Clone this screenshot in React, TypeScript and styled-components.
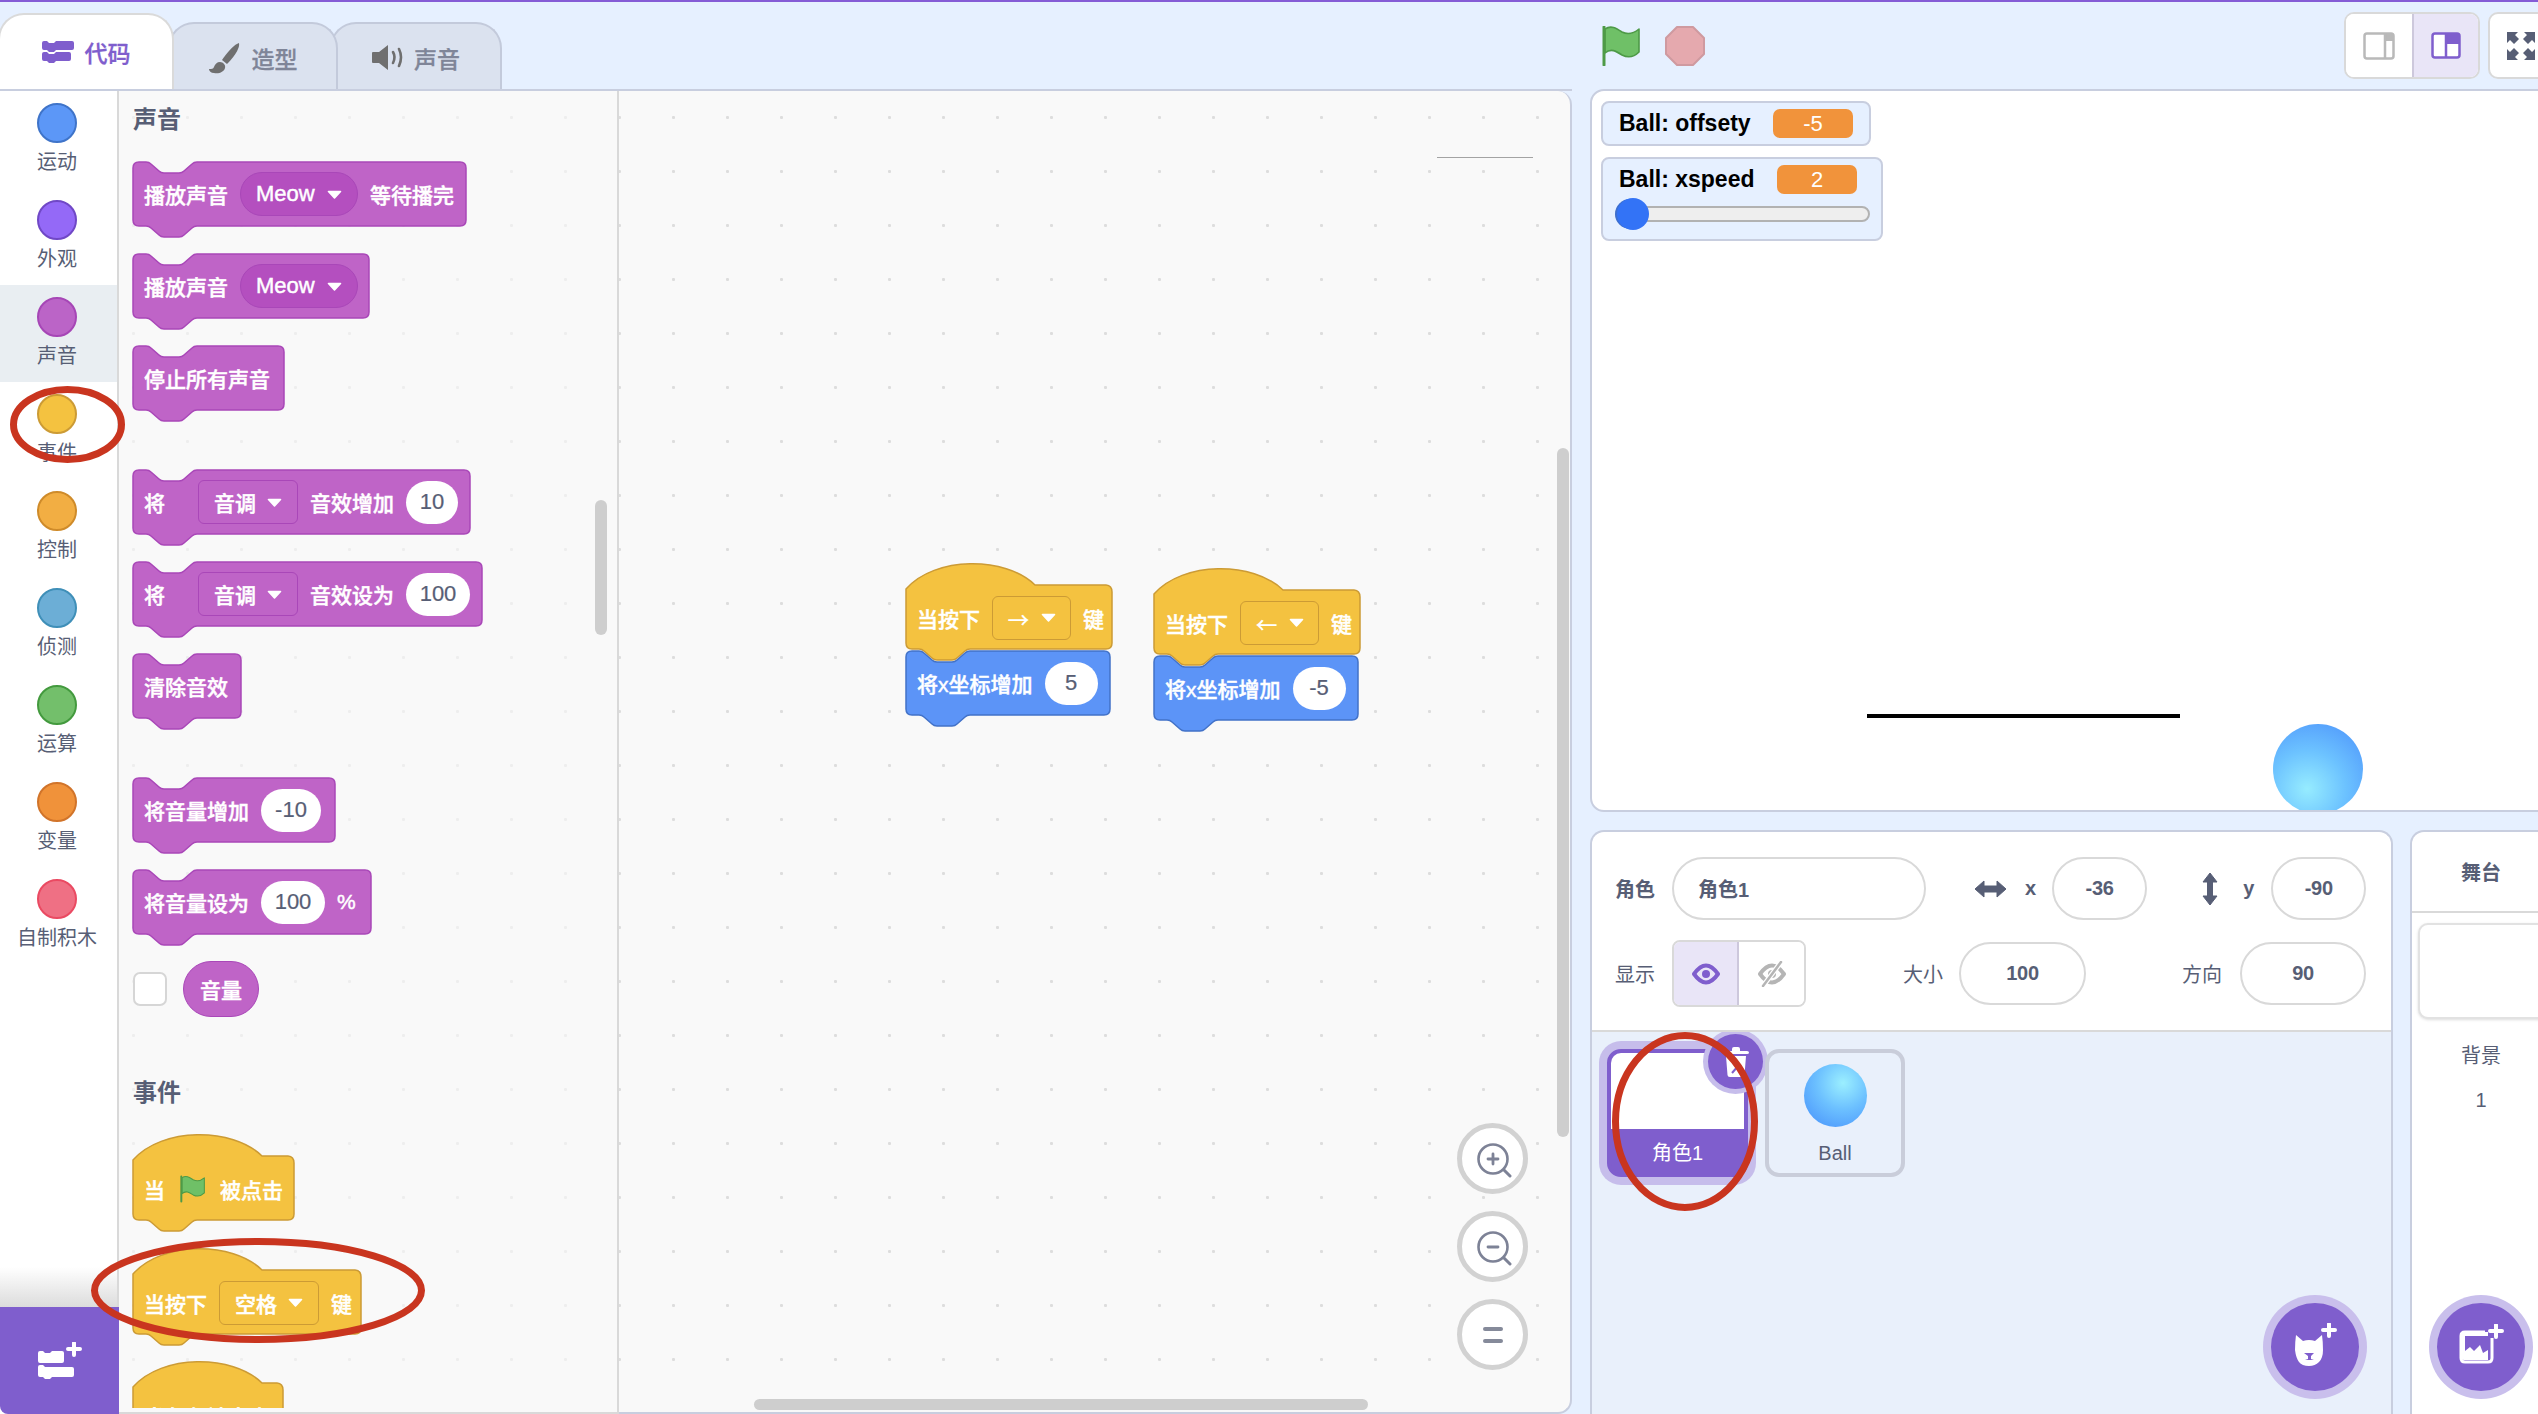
import React from "react";
import styled, { createGlobalStyle } from "styled-components";

const FONT = `"Liberation Sans", "Noto Sans CJK SC", sans-serif`;
const INK = "#575e75";
const PURPLE = "#7f5ecd";

const SOUND = { fill: "#bf64c7", line: "#a947b8", field: "#b44fbf" };
const EVENT = { fill: "#f4c240", line: "#cc9b35", field: "#f4c240" };
const MOTION = { fill: "#5c94f7", line: "#4272c8", field: "#5c94f7" };
type Tone = typeof SOUND;

const Global = createGlobalStyle`
  html, body { margin: 0; padding: 0; background: #e6f0ff; }
  * { box-sizing: border-box; }
`;

const Page = styled.div`
  position: relative;
  display: flex;
  width: 2538px;
  height: 1414px;
  overflow: hidden;
  border-top: 2px solid #855cd6;
  background: #e6f0ff;
  font-family: ${FONT};
  color: ${INK};
`;

const LeftPane = styled.div`
  display: flex;
  flex-direction: column;
  width: 1572px;
  flex: none;
`;

const TabBar = styled.div`
  display: flex;
  align-items: flex-end;
  height: 87px;
  flex: none;
`;

const Tab = styled.div<{ $active?: boolean; $w: number; $ml?: number; $z: number }>`
  display: flex;
  align-items: center;
  justify-content: center;
  gap: 11px;
  position: relative;
  z-index: ${(p) => p.$z};
  width: ${(p) => p.$w}px;
  height: ${(p) => (p.$active ? 76 : 67)}px;
  margin-left: ${(p) => p.$ml ?? 0}px;
  padding-top: ${(p) => (p.$active ? 0 : 2)}px;
  border: 2px solid ${(p) => (p.$active ? "#dadada" : "#c3cadb")};
  border-bottom: none;
  border-radius: 26px 26px 0 0;
  background: ${(p) => (p.$active ? "#fff" : "#dbe2ef")};
  color: ${(p) => (p.$active ? PURPLE : "#7f8598")};
  font-size: 23px;
  font-weight: 500;
  -webkit-text-stroke: 0.3px currentColor;
`;

const Editor = styled.div`
  display: flex;
  flex: 1;
  min-height: 0;
  border-top: 2px solid #c8cedf;
`;

const Categories = styled.div`
  display: flex;
  flex-direction: column;
  width: 119px;
  flex: none;
  background: #fff;
  border-right: 2px solid #d9d9d9;
`;

const CatItem = styled.div<{ $selected?: boolean }>`
  display: flex;
  flex-direction: column;
  align-items: center;
  height: 97px;
  padding: 12px 3px 0 0;
  background: ${(p) => (p.$selected ? "#e9eef2" : "transparent")};
`;

const CatDot = styled.span<{ $fill: string; $line: string }>`
  width: 40px;
  height: 40px;
  border-radius: 50%;
  background: ${(p) => p.$fill};
  border: 2px solid ${(p) => p.$line};
`;

const CatLabel = styled.span`
  margin-top: 7px;
  font-size: 20px;
  line-height: 24px;
  white-space: nowrap;
`;

const ExtFooter = styled.div`
  position: relative;
  display: flex;
  align-items: center;
  justify-content: center;
  margin-top: auto;
  margin-right: -2px;
  height: 107px;
  flex: none;
  background: ${PURPLE};
  border-bottom-left-radius: 8px;
  &::before {
    content: "";
    position: absolute;
    left: 0;
    right: 2px;
    top: -40px;
    height: 40px;
    background: linear-gradient(#ffffff, #dcdcdc);
  }
`;

const Flyout = styled.div`
  position: relative;
  width: 500px;
  flex: none;
  padding-bottom: 4px;
  background-color: #f9f9f9;
  background-image: radial-gradient(circle at 1.5px 1.5px, #eeeeee 1.3px, transparent 1.7px);
  background-size: 54px 54px;
  background-position: 13px 25px;
  border-right: 2px solid #d9d9d9;
  border-bottom: 2px solid #d9d9d9;
`;

const FlyoutClip = styled.div`
  display: flex;
  flex-direction: column;
  align-items: flex-start;
  gap: 26px;
  height: 100%;
  padding: 14px 0 0 13px;
  overflow: hidden;
`;

const SectionTitle = styled.div<{ $mt?: number }>`
  margin-top: ${(p) => p.$mt ?? 0}px;
  margin-left: 1px;
  font-size: 24px;
  line-height: 30px;
  font-weight: 700;
`;

const FlyBar = styled.div`
  position: absolute;
  left: 476px;
  top: 409px;
  width: 12px;
  height: 135px;
  border-radius: 6px;
  background: #cecece;
`;

const Workspace = styled.div`
  position: relative;
  flex: 1;
  overflow: hidden;
  background-color: #f9f9f9;
  background-image: radial-gradient(circle at 1.5px 1.5px, #dddddd 1.3px, transparent 1.7px);
  background-size: 54px 54px;
  background-position: -1px 25px;
  border-right: 2px solid #c8cedf;
  border-bottom: 2px solid #c8cedf;
  border-radius: 0 14px 14px 0;
`;

const Script = styled.div<{ $x: number; $y: number }>`
  position: absolute;
  left: ${(p) => p.$x}px;
  top: ${(p) => p.$y}px;
  display: flex;
  flex-direction: column;
`;

const StrayLine = styled.div`
  position: absolute;
  left: 818px;
  top: 66px;
  width: 96px;
  height: 1px;
  background: #a3a3a3;
`;

const VBar = styled.div`
  position: absolute;
  right: 1px;
  top: 357px;
  width: 12px;
  height: 689px;
  border-radius: 6px;
  background: #cecece;
`;

const HBar = styled.div`
  position: absolute;
  left: 135px;
  bottom: 2px;
  width: 614px;
  height: 11px;
  border-radius: 6px;
  background: #cecece;
`;

const ZoomStack = styled.div`
  position: absolute;
  left: 838px;
  top: 1032px;
  display: flex;
  flex-direction: column;
  gap: 17px;
`;

const ZoomButton = styled.div`
  display: flex;
  align-items: center;
  justify-content: center;
  width: 71px;
  height: 71px;
  border-radius: 50%;
  background: #fff;
  border: 5px solid #d2d2d2;
`;

const BlockWrap = styled.div<{ $w: number; $h: number; $pt: number; $mt?: number }>`
  position: relative;
  flex: none;
  width: ${(p) => p.$w}px;
  height: ${(p) => p.$h}px;
  padding-top: ${(p) => p.$pt}px;
  margin-top: ${(p) => p.$mt ?? 0}px;
`;

const BlockShape = styled.svg`
  position: absolute;
  left: 0;
  top: 0;
  overflow: visible;
`;

const BlockRow = styled.div`
  position: relative;
  display: flex;
  align-items: center;
  gap: 12px;
  height: 100%;
  padding-left: 12px;
  color: #fff;
  font-size: 21px;
  font-weight: 500;
  white-space: nowrap;
  -webkit-text-stroke: 0.45px #fff;
`;

const RoundMenu = styled.div<{ $tone: Tone; $w: number }>`
  display: flex;
  align-items: center;
  gap: 12px;
  width: ${(p) => p.$w}px;
  height: 44px;
  padding-left: 15px;
  border-radius: 22px;
  background: ${(p) => p.$tone.field};
  border: 1px solid ${(p) => p.$tone.line};
  font-size: 22px;
`;

const SquareMenu = styled.div<{ $tone: Tone; $w: number; $ml?: number }>`
  display: flex;
  align-items: center;
  justify-content: center;
  gap: 11px;
  width: ${(p) => p.$w}px;
  height: 44px;
  margin-left: ${(p) => p.$ml ?? 0}px;
  border-radius: 6px;
  background: ${(p) => p.$tone.fill};
  border: 1.5px solid ${(p) => p.$tone.line};
`;

const ArrowGlyph = styled.span`
  font-family: "Noto Sans CJK SC", sans-serif;
  font-size: 22px;
  -webkit-text-stroke: 0;
`;

const FlagSlot = styled.span`
  display: flex;
  margin: 0 3px;
`;

const NumberInput = styled.div<{ $w: number }>`
  display: flex;
  align-items: center;
  justify-content: center;
  width: ${(p) => p.$w}px;
  height: 43px;
  border-radius: 22px;
  background: #fff;
  color: ${INK};
  font-size: 22px;
  font-weight: 400;
  -webkit-text-stroke: 0.2px ${INK};
`;

const ReporterRow = styled.div`
  display: flex;
  align-items: center;
  gap: 16px;
  margin-left: 1px;
`;

const CheckBox = styled.span`
  width: 34px;
  height: 34px;
  border-radius: 7px;
  background: #fff;
  border: 2px solid #d6d6d6;
`;

const Reporter = styled.div`
  display: flex;
  align-items: center;
  justify-content: center;
  width: 76px;
  height: 56px;
  border-radius: 28px;
  background: ${SOUND.fill};
  border: 1px solid ${SOUND.line};
  color: #fff;
  font-size: 21px;
  font-weight: 500;
  -webkit-text-stroke: 0.45px #fff;
`;

const RightPane = styled.div`
  display: flex;
  flex-direction: column;
  flex: none;
  margin-left: 18px;
  width: 948px;
`;

const StageHeader = styled.div`
  display: flex;
  align-items: center;
  height: 87px;
  flex: none;
  padding-left: 12px;
  & > svg {
    flex: none;
  }
`;

const StopSign = styled.svg`
  margin-left: 25px;
`;

const SizeGroup = styled.div`
  display: flex;
  height: 67px;
  margin-left: 639px;
  flex: none;
  border: 2px solid #d9d9d9;
  border-radius: 10px;
  overflow: hidden;
  background: #fff;
`;

const SizeButton = styled.div<{ $on?: boolean }>`
  display: flex;
  align-items: center;
  justify-content: center;
  width: 66px;
  background: ${(p) => (p.$on ? "#e9e5f7" : "#fff")};
  border-left: ${(p) => (p.$on ? "2px solid #cdc8dc" : "none")};
`;

const FullButton = styled.div`
  display: flex;
  align-items: center;
  justify-content: flex-start;
  width: 67px;
  height: 67px;
  margin-left: 8px;
  padding-left: 17px;
  flex: none;
  background: #fff;
  border: 2px solid #d9d9d9;
  border-radius: 10px;
`;

const Stage = styled.div`
  position: relative;
  display: flex;
  flex-direction: column;
  align-items: flex-start;
  gap: 11px;
  width: 1000px;
  height: 723px;
  flex: none;
  padding: 10px 0 0 9px;
  overflow: hidden;
  background: #fff;
  border: 2px solid #c8cedf;
  border-radius: 14px;
`;

const Monitor = styled.div<{ $w: number; $slider?: boolean }>`
  width: ${(p) => p.$w}px;
  height: ${(p) => (p.$slider ? 84 : 45)}px;
  padding: 6px ${(p) => (p.$slider ? 24 : 16)}px 0 16px;
  border: 2px solid #c8cedf;
  border-radius: 8px;
  background: #e6f0ff;
`;

const MonitorRow = styled.div`
  display: flex;
  align-items: center;
  justify-content: space-between;
  height: 29px;
  color: #000;
  font-size: 23px;
  font-weight: 700;
  white-space: nowrap;
`;

const MonitorChip = styled.span`
  display: flex;
  align-items: center;
  justify-content: center;
  width: 80px;
  height: 29px;
  border-radius: 7px;
  background: #f1933b;
  color: #fff;
  font-size: 22px;
  font-weight: 400;
`;

const SliderTrack = styled.div`
  position: relative;
  width: 255px;
  height: 16px;
  margin: 12px 0 0 -4px;
  background: #eeeeee;
  border: 2px solid #b2b2b2;
  border-radius: 8px;
`;

const SliderThumb = styled.span`
  position: absolute;
  left: 0;
  top: -10px;
  width: 32px;
  height: 32px;
  border-radius: 50%;
  background: #3373f6;
  box-shadow: -3px 0 0 -1px #3d6fd0;
`;

const PlayLine = styled.div`
  position: absolute;
  left: 275px;
  top: 623px;
  width: 313px;
  height: 4px;
  background: #000;
`;

const StageBall = styled.div`
  position: absolute;
  left: 681px;
  top: 633px;
  width: 90px;
  height: 90px;
  border-radius: 50%;
  background: radial-gradient(circle at 38% 72%, #96ecff 0%, #6cc2ff 45%, #4a8ffb 100%);
`;

const LowerRow = styled.div`
  display: flex;
  gap: 17px;
  margin-top: 18px;
  flex: 1;
  min-height: 0;
`;

const SpritePanel = styled.div`
  display: flex;
  flex-direction: column;
  width: 803px;
  flex: none;
  border: 2px solid #c8cedf;
  border-bottom: none;
  border-radius: 14px 14px 0 0;
  overflow: hidden;
  background: #fff;
`;

const SpriteInfo = styled.div`
  display: flex;
  flex-direction: column;
  gap: 22px;
  height: 200px;
  flex: none;
  padding: 25px 0 0 23px;
  border-bottom: 2px solid #d9d9d9;
`;

const InfoRow = styled.div`
  display: flex;
  align-items: center;
  height: 63px;
`;

const InfoLabel = styled.span<{ $ml?: number; $strong?: boolean }>`
  margin-left: ${(p) => p.$ml ?? 0}px;
  font-size: 20px;
  font-weight: ${(p) => (p.$strong ? 700 : 400)};
  white-space: nowrap;
`;

const InfoInput = styled.div<{ $w: number; $ml: number; $left?: boolean }>`
  display: flex;
  align-items: center;
  justify-content: ${(p) => (p.$left ? "flex-start" : "center")};
  width: ${(p) => p.$w}px;
  height: 63px;
  margin-left: ${(p) => p.$ml}px;
  padding-left: ${(p) => (p.$left ? 24 : 0)}px;
  border: 2px solid #d9d9d9;
  border-radius: 32px;
  font-size: 20px;
  font-weight: 700;
  letter-spacing: ${(p) => (p.$left ? 0 : -0.3)}px;
`;

const AxisIcon = styled.svg<{ $ml: number }>`
  margin-left: ${(p) => p.$ml}px;
  flex: none;
`;

const AxisLetter = styled.span<{ $ml: number }>`
  margin-left: ${(p) => p.$ml}px;
  font-size: 20px;
  font-weight: 700;
`;

const Toggle = styled.div`
  display: flex;
  width: 134px;
  height: 67px;
  margin-left: 17px;
  flex: none;
  border: 2px solid #d9d9d9;
  border-radius: 8px;
  overflow: hidden;
`;

const ToggleHalf = styled.div<{ $on?: boolean }>`
  display: flex;
  align-items: center;
  justify-content: center;
  width: 50%;
  background: ${(p) => (p.$on ? "#e9e5f7" : "#fff")};
  border-right: ${(p) => (p.$on ? "2px solid #cdc8dc" : "none")};
`;

const SpriteList = styled.div`
  position: relative;
  display: flex;
  align-items: flex-start;
  gap: 17px;
  flex: 1;
  padding: 17px 0 0 15px;
  overflow: hidden;
  background: #e9f0fb;
`;

const Tile = styled.div<{ $selected?: boolean }>`
  position: relative;
  display: flex;
  flex-direction: column;
  width: ${(p) => (p.$selected ? 141 : 140)}px;
  height: 128px;
  flex: none;
  border: 4px solid ${(p) => (p.$selected ? PURPLE : "#c9cdda")};
  border-radius: 14px;
  background: ${(p) => (p.$selected ? PURPLE : "transparent")};
  box-shadow: ${(p) => (p.$selected ? "0 0 0 8px #c6bdeb" : "none")};
`;

const TileThumb = styled.div<{ $blank?: boolean }>`
  display: flex;
  align-items: center;
  justify-content: center;
  height: 76px;
  flex: none;
  background: ${(p) => (p.$blank ? "#fff" : "transparent")};
  border-radius: 10px 10px 0 0;
`;

const TileBall = styled.div`
  width: 63px;
  height: 63px;
  margin-top: 8px;
  border-radius: 50%;
  background: radial-gradient(circle at 62% 30%, #9befff 0%, #6cc0ff 45%, #448dfb 100%);
`;

const TileName = styled.div<{ $selected?: boolean }>`
  display: flex;
  align-items: center;
  justify-content: center;
  flex: 1;
  padding-top: ${(p) => (p.$selected ? 0 : 4)}px;
  color: ${(p) => (p.$selected ? "#fff" : INK)};
  font-size: 20px;
`;

const DeleteBadge = styled.div`
  position: absolute;
  right: -19px;
  top: -19px;
  display: flex;
  align-items: center;
  justify-content: center;
  width: 55px;
  height: 55px;
  border-radius: 50%;
  background: ${PURPLE};
  box-shadow: 0 0 0 5px #c6bdeb;
`;

const AddButton = styled.div<{ $right: number }>`
  position: absolute;
  right: ${(p) => p.$right}px;
  bottom: 23px;
  display: flex;
  align-items: center;
  justify-content: center;
  width: 88px;
  height: 88px;
  border-radius: 50%;
  background: ${PURPLE};
  box-shadow: 0 0 0 8px #c9bfec;
`;

const BackdropPanel = styled.div`
  position: relative;
  display: flex;
  flex-direction: column;
  align-items: center;
  width: 142px;
  flex: none;
  background: #fff;
  border: 2px solid #c8cedf;
  border-bottom: none;
  border-radius: 14px 14px 0 0;
`;

const BackdropHead = styled.div`
  display: flex;
  align-items: center;
  justify-content: center;
  align-self: stretch;
  height: 81px;
  padding-bottom: 1px;
  border-bottom: 2px solid #d9d9d9;
  font-size: 20px;
  font-weight: 700;
`;

const BackdropThumb = styled.div`
  width: 140px;
  height: 96px;
  margin: 10px 0 0 6px;
  flex: none;
  align-self: flex-start;
  background: #fff;
  border: 2px solid #e2e2e2;
  border-radius: 10px;
  box-shadow: 0 1px 3px #00000022;
`;

const BackdropText = styled.div<{ $mt: number }>`
  margin-top: ${(p) => p.$mt}px;
  font-size: 20px;
  line-height: 24px;
`;

const Annotations = styled.svg`
  position: absolute;
  left: 0;
  top: -2px;
  pointer-events: none;
`;

function Caret() {
  return (
    <svg width="15" height="9" viewBox="0 0 15 9">
      <path d="M1.5 1.5h12L7.5 8z" fill="#fff" stroke="#fff" strokeWidth="1.6" strokeLinejoin="round" />
    </svg>
  );
}

function GreenFlag({ w, h }: { w: number; h: number }) {
  return (
    <svg width={w} height={h} viewBox="0 0 38 40">
      <path
        d="M3 3C9-1 14 2 20 6c6 3 11 2 17-3v23c-5 5-11 6-17 3-6-4-11-7-17-2z"
        fill="#6fc067"
        stroke="#4e9a47"
        strokeWidth="1.6"
        strokeLinejoin="round"
      />
      <path d="M2 1v38" stroke="#4e9a47" strokeWidth="3" strokeLinecap="round" />
    </svg>
  );
}

function BlocksGlyph({ fill, w }: { fill: string; w: number }) {
  return (
    <svg width={w} height={w * 0.72} viewBox="0 0 32 23">
      <path
        d="M0 3q0-2 2-2h3l2 2h5l2-2h16q2 0 2 2v5q0 2-2 2H14l-2 2H7l-2-2H2q-2 0-2-2z"
        fill={fill}
      />
      <path
        d="M0 14q0-2 2-2h3l2 2h5l2-2h13q2 0 2 2v5q0 2-2 2H14l-2 2H7l-2-2H2q-2 0-2-2z"
        fill={fill}
      />
    </svg>
  );
}

function MagnifierIcon({ plus }: { plus?: boolean }) {
  return (
    <svg width="38" height="38" viewBox="-3 -3 38 38" fill="none" stroke="#7d8296" strokeLinecap="round">
      <circle cx="16" cy="16" r="14.5" strokeWidth="2.6" />
      <path d="M27 27l6 6" strokeWidth="3" />
      <path d="M11 16h10" strokeWidth="2.8" />
      {plus && <path d="M16 11v10" strokeWidth="2.8" />}
    </svg>
  );
}

function Block({
  w,
  h = 66,
  tone,
  hat,
  mt,
  children,
}: {
  w: number;
  h?: number;
  tone: Tone;
  hat?: boolean;
  mt?: number;
  children: React.ReactNode;
}) {
  const a = hat ? 22 : 0;
  const b = a + h - 1;
  const top = hat
    ? `M1 ${a + 4} C30 -7 100 -7 130 22 H${w - 7} Q${w - 1} ${a + 0.5} ${w - 1} ${a + 7}`
    : `M1 7 Q1 1 7 1 H14 Q17 1 19 3 L27 10 Q29 12 32 12 H47 Q50 12 52 10 L60 3 Q62 1 65 1 H${w - 7} Q${w - 1} 1 ${w - 1} 7`;
  const d = `${top} V${b - 6} Q${w - 1} ${b} ${w - 7} ${b} H65 Q62 ${b} 60 ${b + 2} L52 ${b + 9} Q50 ${b + 11} 47 ${b + 11} H32 Q29 ${b + 11} 27 ${b + 9} L19 ${b + 2} Q17 ${b} 14 ${b} H7 Q1 ${b} 1 ${b - 6} Z`;
  return (
    <BlockWrap $w={w} $h={h + a} $pt={a} $mt={mt}>
      <BlockShape width={w} height={h + a + 12}>
        <path d={d} fill={tone.fill} stroke={tone.line} strokeWidth="1.5" />
      </BlockShape>
      <BlockRow>{children}</BlockRow>
    </BlockWrap>
  );
}

const categories = [
  { name: "运动", fill: "#5c97f7", line: "#3f74c9" },
  { name: "外观", fill: "#9469f7", line: "#7048c6" },
  { name: "声音", fill: "#bb64c7", line: "#a646b6", selected: true },
  { name: "事件", fill: "#f4c240", line: "#cc9b35" },
  { name: "控制", fill: "#f2ae43", line: "#cf8b2a" },
  { name: "侦测", fill: "#6caed6", line: "#3f8fb8" },
  { name: "运算", fill: "#73bf6b", line: "#439a3e" },
  { name: "变量", fill: "#f0923a", line: "#d1742a" },
  { name: "自制积木", fill: "#ef7084", line: "#ea4a62" },
];

function KeyScript({ x, y, arrow, step }: { x: number; y: number; arrow: string; step: string }) {
  return (
    <Script $x={x} $y={y}>
      <Block hat w={208} h={65} tone={EVENT}>
        <span>当按下</span>
        <SquareMenu $tone={EVENT} $w={79}>
          <ArrowGlyph>{arrow}</ArrowGlyph>
          <Caret />
        </SquareMenu>
        <span>键</span>
      </Block>
      <Block w={206} tone={MOTION}>
        <span>将x坐标增加</span>
        <NumberInput $w={53}>{step}</NumberInput>
      </Block>
    </Script>
  );
}

export default function App() {
  return (
    <Page>
      <Global />
      <LeftPane>
        <TabBar>
          <Tab $active $w={176} $ml={-2} $z={3}>
            <BlocksGlyph fill={PURPLE} w={32} />
            代码
          </Tab>
          <Tab $w={170} $ml={-6} $z={2}>
            <svg width="32" height="32" viewBox="0 0 32 32" fill="#6f6f6f">
              <path d="M30 1c1 4-3 12-12 21l-5-4C19 9 26 2 30 1z" />
              <path d="M11 20c3 0 6 3 5 6-1 4-6 6-11 5-3 0-5-2-5-4 3 0 4 0 5-2 1-3 3-5 6-5z" />
            </svg>
            造型
          </Tab>
          <Tab $w={172} $ml={-8} $z={1}>
            <svg width="31" height="25" viewBox="0 0 31 25" fill="#6f6f6f">
              <path d="M0 8q0-1 1-1h6l9-7v25l-9-7H1q-1 0-1-1z" />
              <path d="M21 7q3 5 0 11" fill="none" stroke="#6f6f6f" strokeWidth="2.6" strokeLinecap="round" />
              <path d="M27 4q4 8 0 17" fill="none" stroke="#6f6f6f" strokeWidth="2.6" strokeLinecap="round" />
            </svg>
            声音
          </Tab>
        </TabBar>
        <Editor>
          <Categories>
            {categories.map((c) => (
              <CatItem key={c.name} $selected={c.selected}>
                <CatDot $fill={c.fill} $line={c.line} />
                <CatLabel>{c.name}</CatLabel>
              </CatItem>
            ))}
            <ExtFooter>
              <svg width="44" height="38" viewBox="0 0 44 38">
                <g transform="translate(0 9)">
                  <path d="M0 2q0-2 2-2h3l2 2h5l2-2h10q2 0 2 2v8q0 2-2 2H2q-2 0-2-2z" fill="#fff" />
                  <path d="M0 16q0-2 2-2h3l2 2h27q2 0 2 2v6q0 2-2 2H14l-2 2H7l-2-2H2q-2 0-2-2z" fill="#fff" />
                </g>
                <path d="M36 1v12M30 7h12" stroke="#fff" strokeWidth="4" strokeLinecap="round" />
              </svg>
            </ExtFooter>
          </Categories>

          <Flyout>
            <FlyoutClip>
              <SectionTitle>声音</SectionTitle>
              <Block w={335} tone={SOUND}>
                <span>播放声音</span>
                <RoundMenu $tone={SOUND} $w={118}>
                  <span>Meow</span>
                  <Caret />
                </RoundMenu>
                <span>等待播完</span>
              </Block>
              <Block w={238} tone={SOUND}>
                <span>播放声音</span>
                <RoundMenu $tone={SOUND} $w={118}>
                  <span>Meow</span>
                  <Caret />
                </RoundMenu>
              </Block>
              <Block w={153} tone={SOUND}>
                <span>停止所有声音</span>
              </Block>
              <Block w={339} tone={SOUND} mt={32}>
                <span>将</span>
                <SquareMenu $tone={SOUND} $w={100} $ml={21}>
                  <span>音调</span>
                  <Caret />
                </SquareMenu>
                <span>音效增加</span>
                <NumberInput $w={52}>10</NumberInput>
              </Block>
              <Block w={351} tone={SOUND}>
                <span>将</span>
                <SquareMenu $tone={SOUND} $w={100} $ml={21}>
                  <span>音调</span>
                  <Caret />
                </SquareMenu>
                <span>音效设为</span>
                <NumberInput $w={64}>100</NumberInput>
              </Block>
              <Block w={110} tone={SOUND}>
                <span>清除音效</span>
              </Block>
              <Block w={204} tone={SOUND} mt={32}>
                <span>将音量增加</span>
                <NumberInput $w={60}>-10</NumberInput>
              </Block>
              <Block w={240} tone={SOUND}>
                <span>将音量设为</span>
                <NumberInput $w={64}>100</NumberInput>
                <span>%</span>
              </Block>
              <ReporterRow>
                <CheckBox />
                <Reporter>音量</Reporter>
              </ReporterRow>
              <SectionTitle $mt={35}>事件</SectionTitle>
              <Block hat w={163} h={65} tone={EVENT}>
                <span>当</span>
                <FlagSlot>
                  <GreenFlag w={25} h={30} />
                </FlagSlot>
                <span>被点击</span>
              </Block>
              <Block hat w={230} h={65} tone={EVENT} mt={1}>
                <span>当按下</span>
                <SquareMenu $tone={EVENT} $w={100}>
                  <span>空格</span>
                  <Caret />
                </SquareMenu>
                <span>键</span>
              </Block>
              <Block hat w={152} h={65} tone={EVENT}>
                <span>当角色被点击</span>
              </Block>
            </FlyoutClip>
            <FlyBar />
          </Flyout>

          <Workspace>
            <StrayLine />
            <KeyScript x={286} y={472} arrow="→" step="5" />
            <KeyScript x={534} y={477} arrow="←" step="-5" />
            <ZoomStack>
              <ZoomButton>
                <MagnifierIcon plus />
              </ZoomButton>
              <ZoomButton>
                <MagnifierIcon />
              </ZoomButton>
              <ZoomButton>
                <svg width="20" height="16" viewBox="0 0 20 16" fill="#858a9a">
                  <rect y="0" width="20" height="4" rx="2" />
                  <rect y="12" width="20" height="4" rx="2" />
                </svg>
              </ZoomButton>
            </ZoomStack>
            <VBar />
            <HBar />
          </Workspace>
        </Editor>
      </LeftPane>

      <RightPane>
        <StageHeader>
          <GreenFlag w={38} h={40} />
          <StopSign width="40" height="40" viewBox="0 0 40 40">
            <path
              d="M12 1h16l11 11v16L28 39H12L1 28V12z"
              fill="#e5a9ae"
              stroke="#cf9aa0"
              strokeWidth="2"
              strokeLinejoin="round"
            />
          </StopSign>
          <SizeGroup>
            <SizeButton>
              <svg width="32" height="28" viewBox="0 0 32 28" fill="none">
                <rect x="1.5" y="1.5" width="29" height="25" rx="2.5" fill="#fff" stroke="#b9b9b9" strokeWidth="2.5" />
                <path d="M22 1.5h6q2.5 0 2.5 2.5V9H22z" fill="#b9b9b9" />
                <path d="M22 1.5V26.5" stroke="#b9b9b9" strokeWidth="2.5" />
              </svg>
            </SizeButton>
            <SizeButton $on>
              <svg width="30" height="27" viewBox="0 0 30 27" fill="none">
                <rect x="1.5" y="1.5" width="27" height="24" rx="2.5" fill="#fff" stroke={PURPLE} strokeWidth="2.5" />
                <path d="M15 1.5h11q2.5 0 2.5 2.5V12H15z" fill={PURPLE} />
                <path d="M15 1.5V25.5" stroke={PURPLE} strokeWidth="2.5" />
              </svg>
            </SizeButton>
          </SizeGroup>
          <FullButton>
            <svg width="28" height="28" viewBox="0 0 28 28" fill={INK}>
              <path d="M0 0h11L8 3l4 4-5 5-4-4-3 3z" />
              <path d="M28 0H17l3 3-4 4 5 5 4-4 3 3z" />
              <path d="M0 28h11l-3-3 4-4-5-5-4 4-3-3z" />
              <path d="M28 28H17l3-3-4-4 5-5 4 4 3-3z" />
            </svg>
          </FullButton>
        </StageHeader>

        <Stage>
          <Monitor $w={270}>
            <MonitorRow>
              <span>Ball: offsety</span>
              <MonitorChip>-5</MonitorChip>
            </MonitorRow>
          </Monitor>
          <Monitor $w={282} $slider>
            <MonitorRow>
              <span>Ball: xspeed</span>
              <MonitorChip>2</MonitorChip>
            </MonitorRow>
            <SliderTrack>
              <SliderThumb />
            </SliderTrack>
          </Monitor>
          <PlayLine />
          <StageBall />
        </Stage>

        <LowerRow>
          <SpritePanel>
            <SpriteInfo>
              <InfoRow>
                <InfoLabel $strong>角色</InfoLabel>
                <InfoInput $w={254} $ml={17} $left>
                  角色1
                </InfoInput>
                <AxisIcon $ml={49} width="31" height="20" viewBox="0 0 31 20" fill={INK}>
                  <path d="M0 10l9-8v5h13V2l9 8-9 8v-5H9v5z" stroke={INK} strokeWidth="1" strokeLinejoin="round" />
                </AxisIcon>
                <AxisLetter $ml={19}>x</AxisLetter>
                <InfoInput $w={95} $ml={16}>
                  -36
                </InfoInput>
                <AxisIcon $ml={53} width="20" height="32" viewBox="0 0 20 32" fill={INK}>
                  <path d="M10 0l7 9h-4.5v14H17l-7 9-7-9h4.5V9H3z" stroke={INK} strokeWidth="1" strokeLinejoin="round" />
                </AxisIcon>
                <AxisLetter $ml={23}>y</AxisLetter>
                <InfoInput $w={95} $ml={17}>
                  -90
                </InfoInput>
              </InfoRow>
              <InfoRow>
                <InfoLabel>显示</InfoLabel>
                <Toggle>
                  <ToggleHalf $on>
                    <svg width="28" height="22" viewBox="0 0 28 22" fill="none">
                      <path d="M2 11Q14-6 26 11 14 28 2 11z" stroke={PURPLE} strokeWidth="4" strokeLinejoin="round" />
                      <circle cx="14" cy="11" r="4" fill={PURPLE} />
                    </svg>
                  </ToggleHalf>
                  <ToggleHalf>
                    <svg width="28" height="26" viewBox="0 0 28 26" fill="none">
                      <path d="M2 13Q14-4 26 13 14 30 2 13z" stroke="#b5b5b5" strokeWidth="4" strokeLinejoin="round" />
                      <circle cx="14" cy="13" r="4" fill="#b5b5b5" />
                      <path d="M23 1L5 25" stroke="#fff" strokeWidth="5" />
                      <path d="M23 1L5 25" stroke="#b5b5b5" strokeWidth="2.5" strokeLinecap="round" />
                    </svg>
                  </ToggleHalf>
                </Toggle>
                <InfoLabel $ml={97}>大小</InfoLabel>
                <InfoInput $w={127} $ml={16}>
                  100
                </InfoInput>
                <InfoLabel $ml={96}>方向</InfoLabel>
                <InfoInput $w={126} $ml={18}>
                  90
                </InfoInput>
              </InfoRow>
            </SpriteInfo>
            <SpriteList>
              <Tile $selected>
                <TileThumb $blank />
                <TileName $selected>角色1</TileName>
                <DeleteBadge>
                  <svg width="26" height="32" viewBox="0 0 26 32" fill="#fff">
                    <path d="M9 3q0-2 2-2h4q2 0 2 2v2h7q2 0 2 1.5T24 8H2Q0 8 0 6.5T2 5h7z" />
                    <path d="M3 10h20l-1.5 19q0 2-2.5 2H7q-2.5 0-2.5-2z" />
                    <path d="M9 27l7-8" stroke={PURPLE} strokeWidth="2" />
                  </svg>
                </DeleteBadge>
              </Tile>
              <Tile>
                <TileThumb>
                  <TileBall />
                </TileThumb>
                <TileName>Ball</TileName>
              </Tile>
              <AddButton $right={32}>
                <svg width="48" height="48" viewBox="0 0 48 48" fill="#fff">
                  <path d="M5 12l7 6q6-2 12 0l7-6q1 7 1 15 0 8-4 12t-10 4q-7 0-10-4t-4-12q0-8 1-15z" />
                  <path d="M13 30h10l-3 3v3l3 1h-9l3-1v-3z" fill={PURPLE} />
                  <path d="M38 1v12M32 7h12" stroke="#fff" strokeWidth="4" strokeLinecap="round" />
                </svg>
              </AddButton>
            </SpriteList>
          </SpritePanel>

          <BackdropPanel>
            <BackdropHead>舞台</BackdropHead>
            <BackdropThumb />
            <BackdropText $mt={25}>背景</BackdropText>
            <BackdropText $mt={20}>1</BackdropText>
            <AddButton $right={25}>
              <svg width="46" height="46" viewBox="0 0 46 46" fill="none">
                <path d="M6 8h24v28H6q-3 0-3-3V11q0-3 3-3z" fill="#fff" />
                <path d="M34 14v20q0 4-4 4H7q-4 0-4-4V12q0-4 4-4h20" stroke="#fff" strokeWidth="3" />
                <path d="M7 12h23v14l-5 3-3-8-6 6-4-4-5 4z" fill={PURPLE} />
                <path d="M38 1v12M32 7h12" stroke="#fff" strokeWidth="4" strokeLinecap="round" />
              </svg>
            </AddButton>
          </BackdropPanel>
        </LowerRow>
      </RightPane>

      <Annotations width="2538" height="1414" fill="none" stroke="#c9351f" strokeWidth="7">
        <ellipse cx="67.5" cy="424.5" rx="54" ry="35" />
        <ellipse cx="258" cy="1290.5" rx="163.5" ry="49" />
        <ellipse cx="1685" cy="1121.5" rx="69.5" ry="86" />
      </Annotations>
    </Page>
  );
}
